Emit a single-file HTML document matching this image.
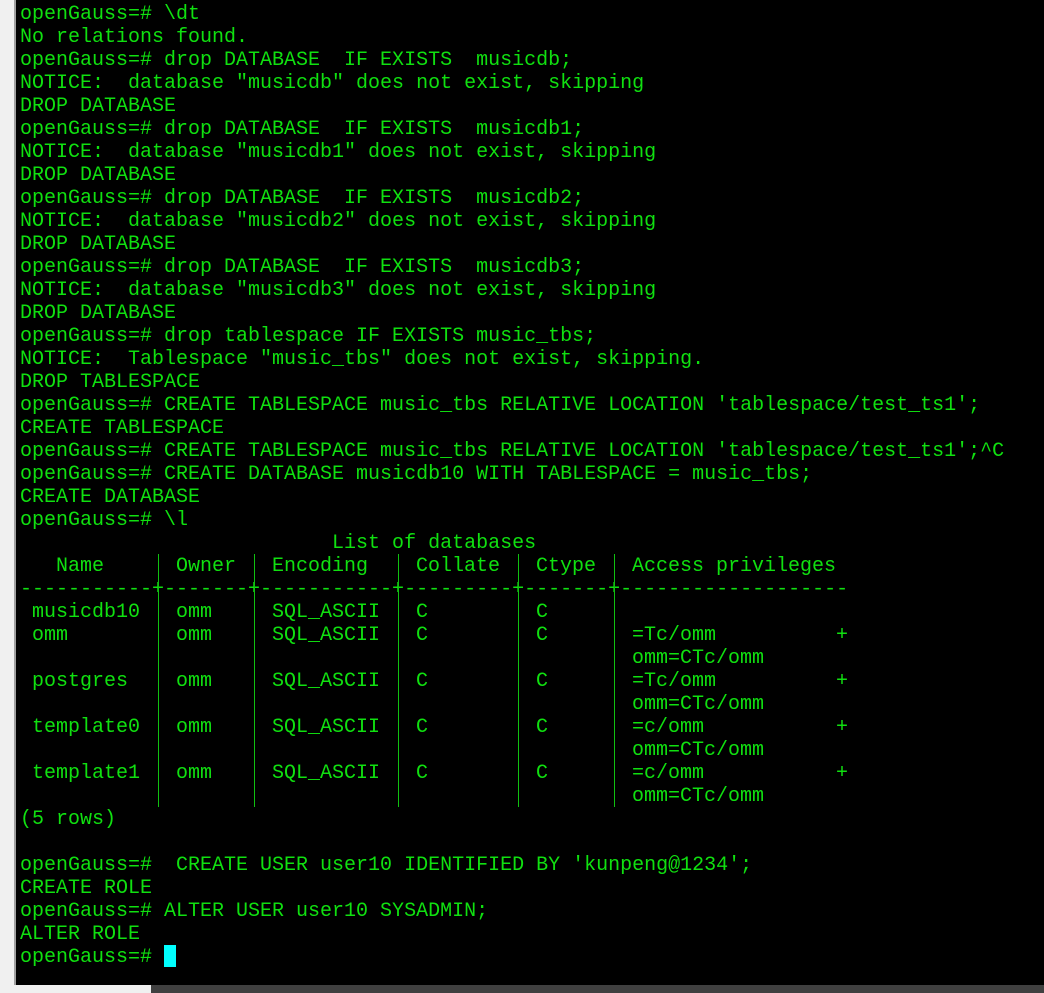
<!DOCTYPE html>
<html><head><meta charset="utf-8"><style>
html,body{margin:0;padding:0;background:#f0f0f0;width:1044px;height:993px;overflow:hidden;position:relative}
#term{position:absolute;left:16px;top:0;width:1028px;height:985px;background:#000}
#lb{position:absolute;left:14px;top:0;width:2px;height:985px;background:#a0a0a0}
pre,.t{position:absolute;margin:0;font-family:"Liberation Mono",monospace;font-size:20px;line-height:23px;color:#10e010;white-space:pre}
pre{left:20px;top:3px}
.v{position:absolute;top:554px;width:1px;height:253px;background:#10c010}
#cur{position:absolute;left:164px;top:945px;width:12px;height:22px;background:#00ffff}
#bot{position:absolute;left:151px;top:985px;width:893px;height:8px;background:#404040}
</style></head><body>
<div id="term"></div><div id="lb"></div>
<pre>openGauss=# \dt
No relations found.
openGauss=# drop DATABASE  IF EXISTS  musicdb;
NOTICE:  database "musicdb" does not exist, skipping
DROP DATABASE
openGauss=# drop DATABASE  IF EXISTS  musicdb1;
NOTICE:  database "musicdb1" does not exist, skipping
DROP DATABASE
openGauss=# drop DATABASE  IF EXISTS  musicdb2;
NOTICE:  database "musicdb2" does not exist, skipping
DROP DATABASE
openGauss=# drop DATABASE  IF EXISTS  musicdb3;
NOTICE:  database "musicdb3" does not exist, skipping
DROP DATABASE
openGauss=# drop tablespace IF EXISTS music_tbs;
NOTICE:  Tablespace "music_tbs" does not exist, skipping.
DROP TABLESPACE
openGauss=# CREATE TABLESPACE music_tbs RELATIVE LOCATION 'tablespace/test_ts1';
CREATE TABLESPACE
openGauss=# CREATE TABLESPACE music_tbs RELATIVE LOCATION 'tablespace/test_ts1';^C
openGauss=# CREATE DATABASE musicdb10 WITH TABLESPACE = music_tbs;
CREATE DATABASE
openGauss=# \l
                          List of databases











(5 rows)

openGauss=#  CREATE USER user10 IDENTIFIED BY 'kunpeng@1234';
CREATE ROLE
openGauss=# ALTER USER user10 SYSADMIN;
ALTER ROLE
openGauss=# </pre>
<div class="t" style="left:56px;top:555px">Name</div>
<div class="t" style="left:176px;top:555px">Owner</div>
<div class="t" style="left:272px;top:555px">Encoding</div>
<div class="t" style="left:416px;top:555px">Collate</div>
<div class="t" style="left:536px;top:555px">Ctype</div>
<div class="t" style="left:632px;top:555px">Access privileges</div>
<div class="t" style="left:20px;top:578px">-----------+-------+-----------+---------+-------+-------------------</div>
<div class="t" style="left:32px;top:601px">musicdb10
omm

postgres

template0

template1</div>
<div class="t" style="left:176px;top:601px">omm
omm

omm

omm

omm</div>
<div class="t" style="left:272px;top:601px">SQL_ASCII
SQL_ASCII

SQL_ASCII

SQL_ASCII

SQL_ASCII</div>
<div class="t" style="left:416px;top:601px">C
C

C

C

C</div>
<div class="t" style="left:536px;top:601px">C
C

C

C

C</div>
<div class="t" style="left:632px;top:601px">
=Tc/omm
omm=CTc/omm
=Tc/omm
omm=CTc/omm
=c/omm
omm=CTc/omm
=c/omm
omm=CTc/omm</div>
<div class="t" style="left:836px;top:601px">
+

+

+

+</div>
<div class="v" style="left:158px"></div>
<div class="v" style="left:254px"></div>
<div class="v" style="left:398px"></div>
<div class="v" style="left:518px"></div>
<div class="v" style="left:614px"></div>
<div id="cur"></div>
<div id="bot"></div>
</body></html>
